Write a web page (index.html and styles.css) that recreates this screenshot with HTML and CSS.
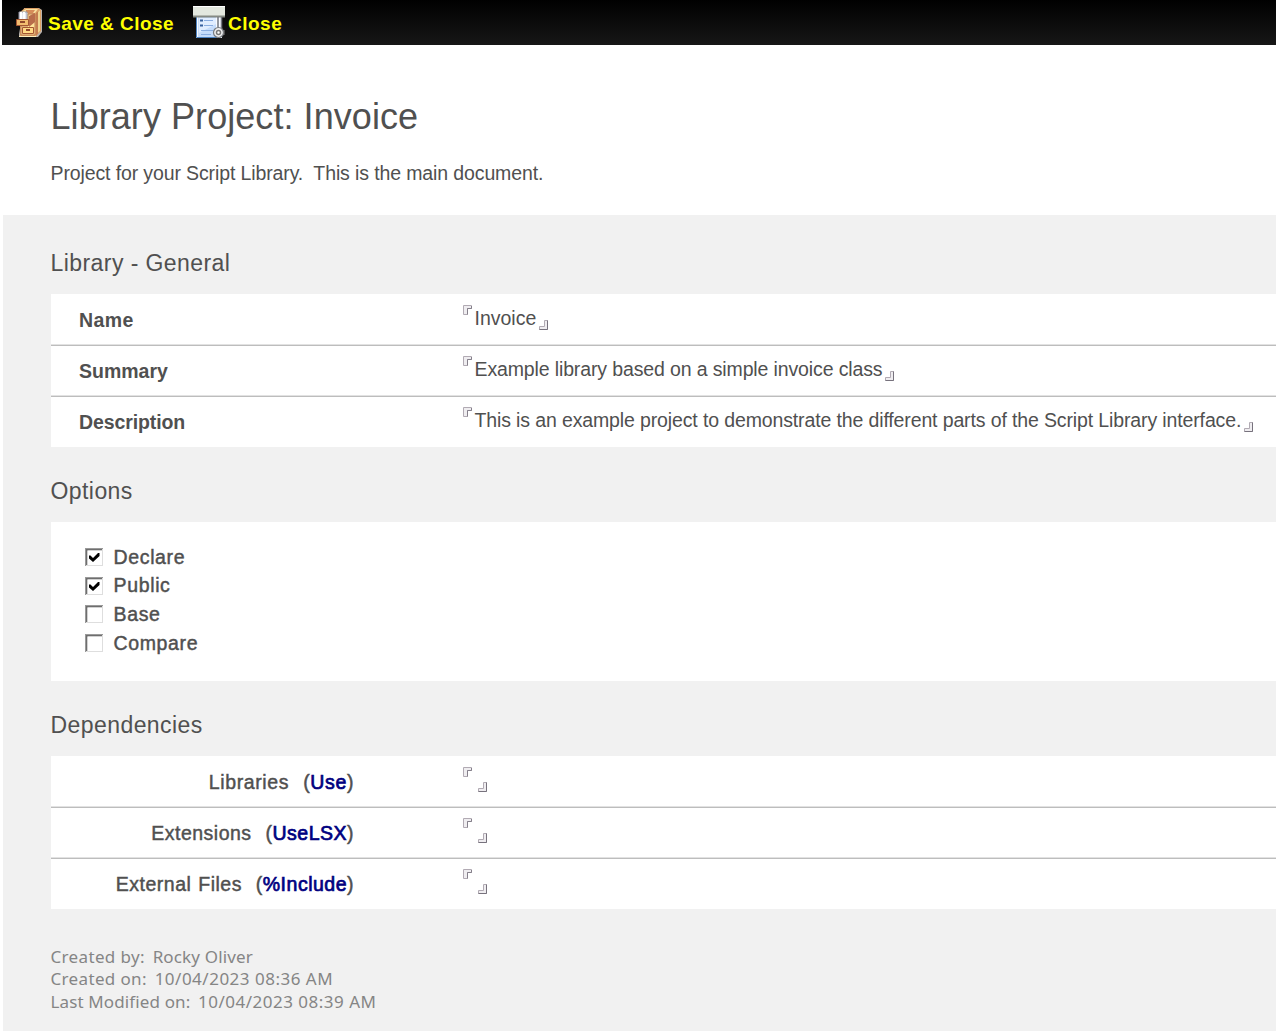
FILE: index.html
```html
<!DOCTYPE html>
<html lang="en">
<head>
<meta charset="utf-8">
<title>Library Project: Invoice</title>
<link rel="stylesheet" href="styles.css">
</head>
<body>
<svg class="defs" aria-hidden="true">
  <symbol id="open" viewBox="0 0 9 10"><path d="M.5 9.500V.5h8v3h-4v6z" fill="#efedf0" stroke="#b1aab3"/><path d="M8.500 1v2.500h-4v6" fill="none" stroke="#85808b"/></symbol>
  <symbol id="close" viewBox="0 0 9 10"><path d="M8.500.5v9h-8v-3h5v-6z" fill="#efedf0" stroke="#b1aab3"/><path d="M8.500.5v9h-8" fill="none" stroke="#77727d"/></symbol>
  <symbol id="box" viewBox="0 0 18 18"><path d="M0 0h18v18H0z" fill="#dedede"/><path d="M0 0h18v1H1v17H0z" fill="#9a9a9a"/><path d="M1 1h16v1.500H2.500V17H1z" fill="#6e6e6e"/><path d="M2.500 2.500H17V17H2.500z" fill="#fff"/></symbol>
  <symbol id="tick" viewBox="0 0 18 18"><path d="M4 7.500h1.500L8 10l5-5h1.500v3L8 14l-4-3.500z"/></symbol>
</svg>
<nav class="toolbar">
  <a class="action save">
    <svg width="27" height="32" viewBox="0 0 27 32">
      <path d="M8 1h15l3 2v22l-4 5H3v-3z" fill="#b9b3ad"/>
      <path d="M4 5 9 1h13l3 2v21l-5 5H4z" fill="#dda064"/>
      <path d="M20 6 24 3v21l-4 5z" fill="#c47c50"/>
      <path d="M22 5l2-2v21l-2 2z" fill="#eed48f"/>
      <path d="M5 5l5-3h12l-3 4h-7v22H5z" fill="#f8dfa0"/>
      <path d="M10 3h9l-2 3h-7z" fill="#d68c59"/>
      <path d="M12 7h7v21H5v-9h7z" fill="#ffe39a" stroke="#b87950"/>
      <path d="M13 9l6-3v9l-6 5z" fill="#b86d4b"/>
      <path d="M3 5h8v8H3z" fill="#e8e9f1" stroke="#9798a8"/>
      <path d="M5 5v8M8 5v8" stroke="#fff" stroke-width="2"/>
      <path d="M.5 12.500h12v6H.5z" fill="#f2bd70" stroke="#a45733"/>
      <path d="M6.500 20.500h11v6h-11z" fill="#ffd985" stroke="#a45733"/>
      <path d="M4 15h5M10 23h4" stroke="#91482c" stroke-width="2"/>
      <path d="M3 29.500h17" stroke="#fff0be"/>
    </svg>
    <span>Save &amp; Close</span>
  </a>
  <a class="action exit">
    <svg width="32" height="33" viewBox="0 0 32 33">
      <path d="M3 10h26v22H3z" fill="#f7faff"/>
      <path d="M5 11h18v20H5z" fill="#c5dcfa"/>
      <path d="M3.500 10v21.500H24" fill="none" stroke="#4d83c2"/>
      <path d="M6 12h17v6L6 27z" fill="#e0edff"/>
      <path d="M7 14.500h3M7 19.500h3" stroke="#345f9d" stroke-width="2"/>
      <path d="M11 14.500h9M11 19.500h9M8 24.500h12M8 28.500h10" stroke="#8aade0"/>
      <path d="M0 0h32v10H0z" fill="#e3e8df"/>
      <path d="M0 .5h32" stroke="#fff"/>
      <path d="M0 10.500h32" stroke="#858a83" stroke-width="2"/>
      <path d="M25 11v12M28.500 11v13" stroke="#737780" stroke-width="1.500"/>
      <circle cx="25.500" cy="26.500" r="5" fill="#eee" stroke="#777b80" stroke-width="1.200"/>
      <circle cx="25.500" cy="26.500" r="2" fill="#fff" stroke="#777" stroke-width="1.500"/>
      <path d="M31 24v5" stroke="#888"/>
    </svg>
    <span>Close</span>
  </a>
</nav>
<header class="intro">
  <h1>Library Project: Invoice</h1>
  <p>Project for your Script Library.&nbsp; This is the main document.</p>
</header>
<main class="content">
  <h2 class="h-general">Library - General</h2>
  <div class="table">
    <div class="row"><div class="label name">Name</div><div class="field"><svg class="corner open"><use href="#open"/></svg><span class="short">Invoice</span><svg class="corner close"><use href="#close"/></svg></div></div>
    <div class="row"><div class="label">Summary</div><div class="field"><svg class="corner open"><use href="#open"/></svg><span>Example library based on a simple invoice class</span><svg class="corner close"><use href="#close"/></svg></div></div>
    <div class="row"><div class="label description">Description</div><div class="field"><svg class="corner open"><use href="#open"/></svg><span>This is an example project to demonstrate the different parts of the Script Library interface.</span><svg class="corner close"><use href="#close"/></svg></div></div>
  </div>
  <h2>Options</h2>
  <div class="options">
    <div class="option"><svg class="check"><use href="#box"/><use href="#tick"/></svg><span>Declare</span></div>
    <div class="option"><svg class="check"><use href="#box"/><use href="#tick"/></svg><span>Public</span></div>
    <div class="option"><svg class="check"><use href="#box"/></svg><span>Base</span></div>
    <div class="option"><svg class="check"><use href="#box"/></svg><span>Compare</span></div>
  </div>
  <h2>Dependencies</h2>
  <div class="table">
    <div class="row"><div class="label dep libs">Libraries&nbsp; (<b>Use</b>)</div><div class="field empty"><svg class="corner open"><use href="#open"/></svg><svg class="corner close"><use href="#close"/></svg></div></div>
    <div class="row"><div class="label dep">Extensions&nbsp; (<b>UseLSX</b>)</div><div class="field empty"><svg class="corner open"><use href="#open"/></svg><svg class="corner close"><use href="#close"/></svg></div></div>
    <div class="row"><div class="label dep">External Files&nbsp; (<b>%Include</b>)</div><div class="field empty"><svg class="corner open"><use href="#open"/></svg><svg class="corner close"><use href="#close"/></svg></div></div>
  </div>
  <footer>
    <div class="by">Created by: <span>Rocky Oliver</span></div>
    <div class="on">Created on: <span>10/04/2023 08:36 AM</span></div>
    <div class="modified">Last Modified on: <span>10/04/2023 08:39 AM</span></div>
  </footer>
</main>
</body>
</html>
```

FILE: styles.css
```css
* { box-sizing: border-box; }
html { background: #fff; overflow: hidden; }
body { margin: 0 0 0 2px; height: 1031px; overflow: hidden; font-family: "Liberation Sans", Arial, sans-serif; color: #505050; display: flex; flex-direction: column; }
.defs { display: none; }
.toolbar { height: 45px; flex: none; background: linear-gradient(#000, #171717); display: flex; color: #ff0; font-weight: bold; font-size: 19px; line-height: 24px; }
.action { display: flex; }
.action svg { flex: none; }
.save { padding-left: 14px; width: 191px; }
.save svg { margin-top: 7px; }
.save span { margin: 12px 0 0 5px; letter-spacing: .48px; white-space: nowrap; }
.exit svg { margin-top: 6px; }
.exit span { margin: 12px 0 0 3px; letter-spacing: .5px; }
.intro { height: 170px; flex: none; padding: 51px 0 0 48.500px; }
h1 { margin: 0; font-size: 36px; font-weight: normal; line-height: 42px; letter-spacing: .06px; }
.intro p { margin: 22px 0 0; font-size: 19.500px; line-height: 26px; letter-spacing: -.12px; }
.content { flex: 1; background: #f1f1f1; padding-left: 48px; margin-left: .5px; }
h2 { margin: 0; font-size: 23px; font-weight: normal; line-height: 28px; letter-spacing: .43px; padding-top: 30px; height: 75px; }
.h-general { padding-top: 34px; height: 79px; }
.table { background: #fff; }
.row { height: 51px; display: flex; border-bottom: 1px solid #e2e2e2; }
.row:last-child { border-bottom: 0; }
.row + .row { box-shadow: inset 0 1px #bdbdbd; }
.label { width: 411px; flex: none; padding-left: 28.500px; font-size: 19.500px; font-weight: bold; line-height: 52px; }
.name { letter-spacing: .4px; }
.description { letter-spacing: -.1px; }
.dep { width: 303.500px; margin-right: 107.500px; padding: 0; text-align: right; font-weight: normal; -webkit-text-stroke: .45px currentColor; letter-spacing: .5px; word-spacing: 1px; white-space: nowrap; }
.libs { letter-spacing: .62px; }
.dep b { font-weight: inherit; color: #000080; -webkit-text-stroke: .7px #000080; }
.field { display: flex; font-size: 19.500px; line-height: 49px; letter-spacing: -.13px; white-space: nowrap; }
.short { letter-spacing: 0; }
.corner { width: 9px; height: 10px; flex: none; }
.open { margin: 11px 3px 0 1px; }
.close { margin: 26px 0 0 3px; }
.options { height: 159px; background: #fff; padding: 21px 0 0 34px; }
.option { height: 28.600px; display: flex; align-items: center; font-size: 19.500px; -webkit-text-stroke: .45px currentColor; letter-spacing: .65px; }
.check { width: 18px; height: 18px; margin-right: 11px; stroke: none; -webkit-text-stroke: 0; }
footer { padding-top: 36.500px; font-family: "Noto Sans", sans-serif; font-size: 17px; line-height: 22.600px; color: #858585; }
footer span { margin-left: 3px; letter-spacing: .5px; }
.by, .on { letter-spacing: .35px; }
.by span { letter-spacing: .15px; }
.modified { letter-spacing: .13px; }
```
